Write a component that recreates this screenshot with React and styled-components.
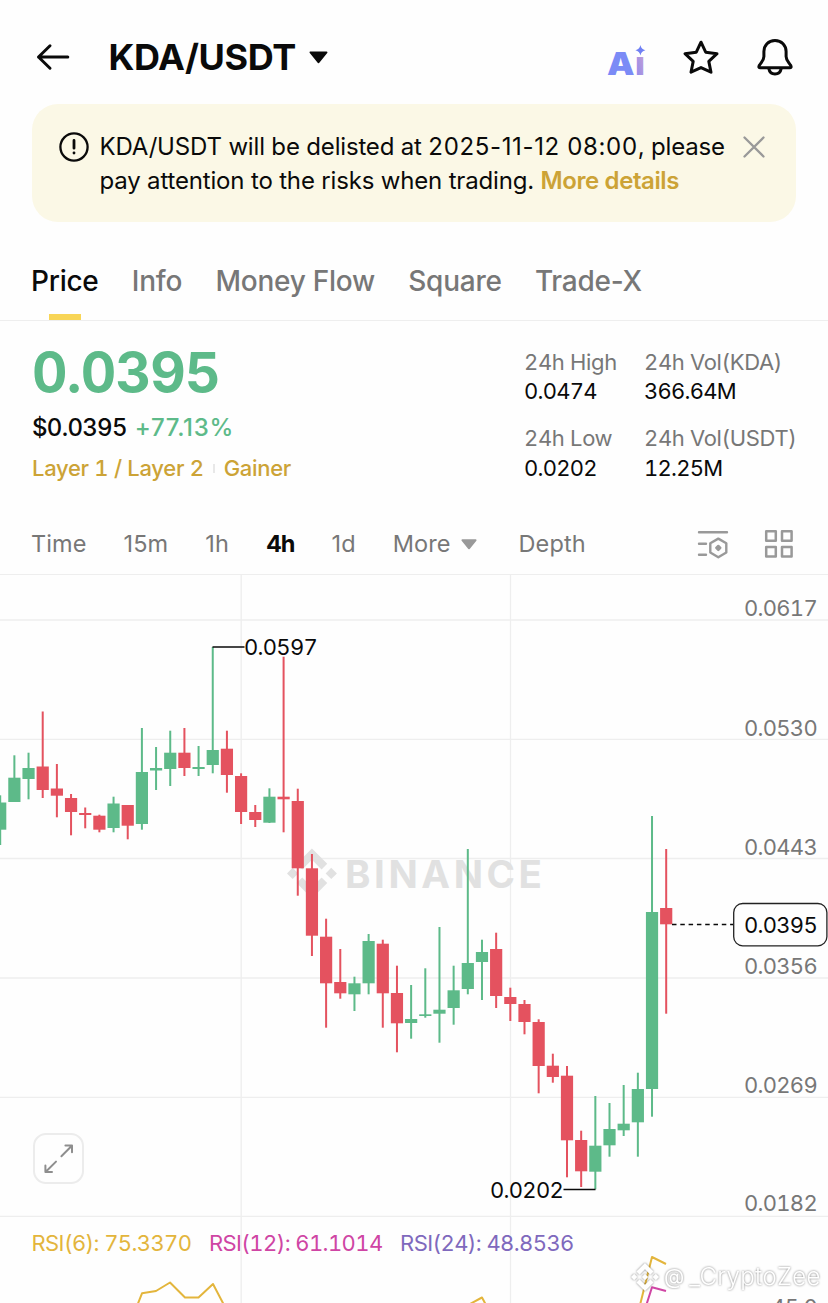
import React from "react";
import styled, { createGlobalStyle } from "styled-components";

const GREEN = "#5dba89";
const RED = "#e4525f";
const GOLD = "#cca336";
const GREY = "#777777";
const LINE = "#eeeeee";

const GlobalStyle = createGlobalStyle`
  * { box-sizing: border-box; }
  body {
    margin: 0;
    background: #fefefe;
    color: #0a0a0a;
    font-family: Inter, "Liberation Sans", sans-serif;
    overflow: hidden;
  }
`;

const Screen = styled.main`
  width: 828px;
  height: 1303px;
  overflow: hidden;
  display: flex;
  flex-direction: column;
  background: #fefefe;
`;

const Header = styled.header`
  flex: none;
  height: 104px;
  padding: 10px 35px 0 35px;
  display: flex;
  align-items: center;
`;

const Pair = styled.h1`
  margin: 0 13px 0 37.5px;
  font-size: 36px;
  line-height: 44px;
  font-weight: 700;
  letter-spacing: -0.4px;
`;

const HeaderActions = styled.div`
  margin-left: auto;
  display: flex;
  align-items: center;
  gap: 38px;
`;

const Icon = styled.svg`
  display: block;
  flex: none;
  overflow: visible;
  fill: none;
  stroke: ${(p) => p.$color || "#0a0a0a"};
  stroke-width: ${(p) => p.$stroke || 3};
  stroke-linecap: round;
  stroke-linejoin: round;
`;

const Notice = styled.section`
  flex: none;
  height: 118px;
  margin: 0 32px;
  padding: 26px 31px 0 26px;
  display: flex;
  align-items: flex-start;
  border-radius: 26px;
  background: #fbf8e6;
`;

const NoticeText = styled.p`
  margin: 0 0 0 9.5px;
  font-size: 24px;
  line-height: 34px;
  white-space: nowrap;
`;

const NoticeLine = styled.span`
  display: block;
  letter-spacing: -0.17px;
`;

const NoticeDate = styled.time`
  letter-spacing: 0.65px;
`;

const NoticeLink = styled.a`
  color: ${GOLD};
  font-weight: 600;
  letter-spacing: -0.4px;
`;

const NoticeIcon = styled.span`
  padding-top: 1px;
`;

const NoticeClose = styled.span`
  margin-left: auto;
  padding-top: 6px;
`;

const Tabs = styled.nav`
  flex: none;
  height: 99px;
  padding: 39px 31px 0;
  display: flex;
  gap: 33.3px;
  border-bottom: 1px solid ${LINE};
`;

const Tab = styled.div`
  display: flex;
  flex-direction: column;
  align-items: center;
  justify-content: space-between;
  font-size: 28px;
  line-height: 40px;
  font-weight: 500;
  letter-spacing: -0.25px;
  color: ${(p) => (p.$active ? "#0a0a0a" : GREY)};
`;

const TabMarker = styled.span`
  width: 32px;
  height: 6px;
  background: #f8d556;
`;

const Summary = styled.section`
  flex: none;
  height: 191px;
  padding: 21px 20px 0 32px;
  display: flex;
  font-variant-numeric: tabular-nums;
`;

const PriceColumn = styled.div`
  width: 492px;
`;

const LastPrice = styled.div`
  font-size: 55px;
  line-height: 60px;
  font-weight: 700;
  letter-spacing: -0.8px;
  color: ${GREEN};
`;

const FiatRow = styled.div`
  display: flex;
  gap: 8px;
  margin-top: 11px;
  font-size: 24px;
  line-height: 30px;
  font-weight: 500;
  letter-spacing: -0.7px;
`;

const Change = styled.span`
  color: ${GREEN};
  letter-spacing: 0.7px;
  font-variant-numeric: proportional-nums;
`;

const TagRow = styled.div`
  display: flex;
  align-items: center;
  gap: 9px;
  margin-top: 12px;
  font-size: 22px;
  line-height: 27px;
  font-weight: 500;
  letter-spacing: -0.3px;
  color: ${GOLD};
`;

const TagDivider = styled.span`
  width: 2px;
  height: 9px;
  background: #e8e8e8;
`;

const StatGrid = styled.div`
  display: grid;
  grid-template-columns: 120px 160px;
  grid-auto-rows: 59px;
  row-gap: 17.5px;
  padding-top: 5.5px;
`;

const Stat = styled.div`
  font-size: 22px;
  line-height: 29.5px;
  letter-spacing: -0.75px;
  white-space: nowrap;
`;

const StatLabel = styled.div`
  color: ${GREY};
  letter-spacing: -0.35px;
`;

const Toolbar = styled.nav`
  flex: none;
  height: 63px;
  padding: 2px 34px 0 31px;
  display: flex;
  align-items: center;
  gap: 37px;
  border-bottom: 1px solid ${LINE};
`;

const Interval = styled.span`
  display: flex;
  align-items: center;
  gap: 10px;
  margin-left: ${(p) => p.$indent || 0}px;
  font-size: 23.5px;
  line-height: 30px;
  letter-spacing: ${(p) => (p.$active ? -1 : 0.1)}px;
  font-weight: ${(p) => (p.$active ? 700 : 400)};
  color: ${(p) => (p.$active ? "#0a0a0a" : GREY)};
`;

const ToolIcons = styled.div`
  margin-left: auto;
  display: flex;
  align-items: center;
  gap: 35px;
`;

const PricePanel = styled.section`
  position: relative;
  flex: none;
  height: 642px;
`;

const Plot = styled.svg`
  display: block;
  text {
    font-size: 22px;
    letter-spacing: -0.7px;
    font-variant-numeric: tabular-nums;
  }
`;

const AxisLabel = styled.text`
  fill: ${(p) => (p.$strong ? "#0a0a0a" : GREY)};
  text-anchor: ${(p) => p.$anchor || "end"};
`;

const BrandMark = styled.text`
  && {
    font-size: 38.5px;
    font-weight: 700;
    letter-spacing: 0;
    fill: #e1e1e1;
  }
`;

const ExpandButton = styled.button`
  position: absolute;
  left: 33px;
  bottom: 33px;
  width: 51px;
  height: 51px;
  padding: 0;
  display: flex;
  align-items: center;
  justify-content: center;
  border: 2px solid #ececec;
  border-radius: 13px;
  background: #fefefe;
`;

const RsiPanel = styled.section`
  position: relative;
  flex: none;
  height: 86px;
  overflow: hidden;
`;

const RsiPlot = styled(Plot)`
  position: absolute;
  inset: 0;
`;

const Legend = styled.div`
  position: relative;
  display: flex;
  gap: 17.5px;
  padding: 11px 0 0 31.5px;
  font-size: 22px;
  line-height: 30px;
  letter-spacing: -0.6px;
  font-variant-numeric: tabular-nums;
`;

const LegendItem = styled.span`
  color: ${(p) => p.$color};
`;

const Signature = styled.div`
  position: absolute;
  left: 631px;
  top: 44px;
  display: flex;
  align-items: center;
  color: #ffffff;
  font-size: 24px;
  line-height: 32px;
  filter: drop-shadow(0 0 1px rgba(0, 0, 0, 0.5));
`;

const SignatureAt = styled.span`
  margin: 0 5px 0 5px;
  font-size: 21px;
`;

const SignatureName = styled.span`
  font-weight: 300;
  letter-spacing: 0.35px;
`;

const BINANCE_LOGO =
  "M16.624 13.9202l2.7175 2.7154-7.353 7.353-7.353-7.352 2.7175-2.7164 4.6355 4.6595 4.6356-4.6595zm4.6366-4.6366L24 12l-2.7154 2.7164L18.5682 12l2.6924-2.7164zm-9.272.001l2.7163 2.6914-2.7164 2.7174v-.001L9.2721 12l2.7164-2.7154zm-9.2722-.001L5.4088 12l-2.6914 2.6924L0 12l2.7164-2.7164zM11.9885.0115l7.353 7.329-2.7174 2.7154-4.6356-4.6356-4.6355 4.6595-2.7174-2.7154 7.353-7.353z";

// [rising, body top, body bottom, wick top, wick bottom]
const CANDLES = [
  [1, 802.5, 829.7, 795.3, 845],
  [1, 777.7, 802, 755.3, 802],
  [1, 768, 779, 752.7, 799.3],
  [0, 766.5, 790, 711.5, 798],
  [0, 788.5, 795.7, 764, 817.3],
  [0, 798, 812, 794, 835.3],
  [0, 813, 815, 807.5, 828.3],
  [0, 815.7, 829.7, 814.7, 832.3],
  [1, 803.5, 828, 796.7, 832.3],
  [0, 805, 825.7, 805, 839.3],
  [1, 772, 824, 728, 829.7],
  [1, 768, 770.5, 747, 790],
  [1, 752.7, 769, 730.7, 786],
  [0, 752.7, 768, 728, 776],
  [1, 767, 769, 746, 776],
  [1, 750, 765, 647, 773.3],
  [0, 748.7, 775, 730.7, 792.7],
  [0, 776, 812, 773.3, 824],
  [0, 812, 820, 805, 827],
  [1, 796.7, 822.7, 788.3, 823],
  [0, 796.7, 799.3, 656.7, 832.3],
  [0, 801, 868.3, 788.7, 895.7],
  [0, 868.3, 935.7, 854, 956],
  [0, 936.7, 983.3, 918.7, 1027.7],
  [0, 982, 993.3, 949, 998.7],
  [1, 983.3, 994.3, 976.7, 1011],
  [1, 941, 983.3, 934, 994.3],
  [0, 943.7, 993.3, 939.7, 1027.7],
  [0, 993, 1023.3, 965.7, 1052.3],
  [1, 1019, 1023, 985, 1038.7],
  [1, 1014.3, 1016, 968.3, 1017.7],
  [1, 1009.7, 1013.7, 927, 1042.7],
  [1, 990.3, 1008, 965.7, 1024.7],
  [1, 963, 989, 849, 994.3],
  [1, 952, 962, 939.7, 1000],
  [0, 949, 996, 932.7, 1008],
  [0, 997, 1004, 987.7, 1021],
  [0, 1004, 1022, 1000, 1034.3],
  [0, 1022, 1066, 1019.3, 1093.3],
  [0, 1065.7, 1077, 1053.7, 1082.7],
  [0, 1075.7, 1140.3, 1066, 1177.3],
  [0, 1140, 1171.3, 1130.7, 1187],
  [1, 1145.7, 1171.7, 1096, 1189.3],
  [1, 1129, 1145.3, 1103, 1156.7],
  [1, 1123.7, 1130.3, 1085, 1136],
  [1, 1089, 1122.3, 1072.7, 1156.7],
  [1, 912, 1089, 816, 1116.7],
  [0, 908, 924.3, 849, 1013.7],
];

const AXIS = [
  ["0.0617", 616],
  ["0.0530", 735.5],
  ["0.0443", 854.5],
  ["0.0356", 974],
  ["0.0269", 1093],
  ["0.0182", 1210.5],
];

const ROWS = [620, 739.4, 858.5, 978, 1097.3, 1216.4];
const COLUMNS = [241.2, 510.5];

const Candle = ({ index, data }) => {
  const [rising, top, bottom, high, low] = data;
  const x = 0.2 + index * 14.17;
  const color = rising ? GREEN : RED;
  return (
    <g fill={color}>
      <rect x={x - 1} y={high} width="2" height={low - high} />
      <rect x={x - 6.1} y={top} width="12.2" height={bottom - top} />
    </g>
  );
};

const BackIcon = () => (
  <Icon width="36" height="30" viewBox="0 0 36 30">
    <path d="M3.5 15H32.8M15 3.8L3.5 15L15 26.2" />
  </Icon>
);

const CaretIcon = ({ width, height, color }) => (
  <Icon width={width} height={height} viewBox="0 0 18 12" $color={color} $stroke={2}>
    <path d="M1.5 1.2H16.5L9 10.4Z" fill={color} />
  </Icon>
);

const AiText = styled.text`
  font-size: 32px;
  font-weight: 900;
  stroke: none;
`;

const AiIcon = () => (
  <Icon width="40" height="36" viewBox="0 0 40 36">
    <defs>
      <linearGradient id="ai" x1="0" y1="1" x2="1" y2="0">
        <stop offset="0" stopColor="#8488f2" />
        <stop offset="1" stopColor="#d3a3cf" />
      </linearGradient>
    </defs>
    <AiText x="2" y="36" fill="#7b8bf6" textLength="27.5" lengthAdjust="spacingAndGlyphs">A</AiText>
    <AiText x="30.2" y="36" fill="url(#ai)">ı</AiText>
    <path
      d="M35.4 6Q36.2 10.4 40.4 11.2Q36.2 12 35.4 16.4Q34.6 12 30.4 11.2Q34.6 10.4 35.4 6Z"
      fill="#7080f4"
      stroke="none"
    />
  </Icon>
);

const StarIcon = () => (
  <Icon width="36" height="36" viewBox="0 0 36 36">
    <path d="M18 3.2L22.7 13.2L34 14.7L25.8 22.4L28 33.2L18 28.6L8 33.2L10.2 22.4L2 14.7L13.3 13.2Z" />
  </Icon>
);

const BellIcon = () => (
  <Icon width="36" height="38" viewBox="0 0 36 38">
    <path d="M18 2.5C11.4 2.5 6.9 7.3 6.9 13.6V18.5C6.9 22.5 4 24.4 2.2 27.6C1.5 29 2 29.8 3.3 29.8H32.7C34 29.8 34.5 29 33.8 27.6C32 24.4 29.1 22.5 29.1 18.5V13.6C29.1 7.3 24.6 2.5 18 2.5Z" />
    <path d="M11.8 30.5C12.4 34 14.8 36 18 36C21.2 36 23.6 34 24.2 30.5" />
  </Icon>
);

const AlertIcon = () => (
  <Icon width="32" height="32" viewBox="0 0 32 32" $stroke={2.3}>
    <circle cx="16" cy="16" r="13.6" />
    <path d="M16 9.5V17.2M16 21.8V22" strokeWidth="2.8" />
  </Icon>
);

const CloseIcon = () => (
  <Icon width="22" height="22" viewBox="0 0 22 22" $color="#999999" $stroke={2.3}>
    <path d="M1.5 1.5L20.5 20.5M20.5 1.5L1.5 20.5" />
  </Icon>
);

const IndicatorIcon = () => (
  <Icon width="32" height="32" viewBox="0 0 32 32" $color="#999999" $stroke={2.4}>
    <path d="M2 4.2H30M2 15.7H9M2 26.7H9" />
    <path d="M21.3 10.6L29.3 15.2V24.5L21.3 29.2L13.3 24.5V15.2Z" />
    <path d="M21.3 17.9L23.3 19.9L21.3 21.9L19.3 19.9Z" fill="#999999" />
  </Icon>
);

const GridIcon = () => (
  <Icon width="30" height="30" viewBox="0 0 30 30" $color="#999999" $stroke={2.5}>
    <path d="M2.2 2.2H11.8V11.8H2.2ZM18 2.2H27.6V11.8H18ZM2.2 18H11.8V27.6H2.2ZM18 18H27.6V27.6H18Z" />
  </Icon>
);

const ExpandIcon = () => (
  <Icon width="32" height="32" viewBox="0 0 32 32" $color="#8e8e8e" $stroke={2}>
    <path d="M18.4 13.2L28.6 3M22.4 2.6H29V9.2M13 18.6L2.8 28.8M2.4 22.4V29H9" />
  </Icon>
);

export default function App() {
  return (
    <>
      <GlobalStyle />
      <Screen>
        <Header>
          <BackIcon />
          <Pair>KDA/USDT</Pair>
          <CaretIcon width="19" height="13" color="#0a0a0a" />
          <HeaderActions>
            <AiIcon />
            <StarIcon />
            <BellIcon />
          </HeaderActions>
        </Header>

        <Notice>
          <NoticeIcon>
            <AlertIcon />
          </NoticeIcon>
          <NoticeText>
            <NoticeLine>
              KDA/USDT will be delisted at <NoticeDate>2025-11-12 08:00</NoticeDate>, please
            </NoticeLine>
            <NoticeLine>
              pay attention to the risks when trading. <NoticeLink>More details</NoticeLink>
            </NoticeLine>
          </NoticeText>
          <NoticeClose>
            <CloseIcon />
          </NoticeClose>
        </Notice>

        <Tabs>
          <Tab $active>
            Price
            <TabMarker />
          </Tab>
          {["Info", "Money Flow", "Square", "Trade-X"].map((name) => (
            <Tab key={name}>{name}</Tab>
          ))}
        </Tabs>

        <Summary>
          <PriceColumn>
            <LastPrice>0.0395</LastPrice>
            <FiatRow>
              <span>$0.0395</span>
              <Change>+77.13%</Change>
            </FiatRow>
            <TagRow>
              <span>Layer 1 / Layer 2</span>
              <TagDivider />
              <span>Gainer</span>
            </TagRow>
          </PriceColumn>
          <StatGrid>
            {[
              ["24h High", "0.0474"],
              ["24h Vol(KDA)", "366.64M"],
              ["24h Low", "0.0202"],
              ["24h Vol(USDT)", "12.25M"],
            ].map(([label, value]) => (
              <Stat key={label}>
                <StatLabel>{label}</StatLabel>
                {value}
              </Stat>
            ))}
          </StatGrid>
        </Summary>

        <Toolbar>
          <Interval>Time</Interval>
          <Interval>15m</Interval>
          <Interval>1h</Interval>
          <Interval $active>4h</Interval>
          <Interval>1d</Interval>
          <Interval>
            More
            <CaretIcon width="16" height="11" color="#999999" />
          </Interval>
          <Interval $indent={5}>Depth</Interval>
          <ToolIcons>
            <IndicatorIcon />
            <GridIcon />
          </ToolIcons>
        </Toolbar>

        <PricePanel>
          <Plot width="828" height="642" viewBox="0 575 828 642">
            <g stroke={LINE} strokeWidth="1.3">
              {ROWS.map((y) => (
                <line key={y} x1="0" x2="828" y1={y} y2={y} />
              ))}
              {COLUMNS.map((x) => (
                <line key={x} x1={x} x2={x} y1="575" y2="1217" />
              ))}
            </g>
            <path d={BINANCE_LOGO} fill="#e1e1e1" transform="translate(287 848.5) scale(2.08)" />
            <BrandMark x="345" y="888" textLength="197">
              BINANCE
            </BrandMark>
            {CANDLES.map((data, i) => (
              <Candle key={i} index={i} data={data} />
            ))}
            <g stroke="#0a0a0a" strokeWidth="1.3">
              <line x1="212.5" x2="244.5" y1="647" y2="647" />
              <line x1="563.5" x2="595.5" y1="1189.5" y2="1189.5" />
              <line x1="672" x2="733" y1="924.5" y2="924.5" strokeDasharray="4.5 3.8" />
            </g>
            <AxisLabel $strong $anchor="start" x="244" y="655.3">0.0597</AxisLabel>
            <AxisLabel $strong $anchor="start" x="490" y="1198">0.0202</AxisLabel>
            {AXIS.map(([label, y]) => (
              <AxisLabel key={label} x="817" y={y}>
                {label}
              </AxisLabel>
            ))}
            <rect
              x="733.7"
              y="903.5"
              width="93.2"
              height="42.3"
              rx="9"
              fill="#fefefe"
              stroke="#222222"
              strokeWidth="1.3"
            />
            <AxisLabel $strong x="817" y="933">0.0395</AxisLabel>
          </Plot>
          <ExpandButton aria-label="Expand chart">
            <ExpandIcon />
          </ExpandButton>
        </PricePanel>

        <RsiPanel>
          <RsiPlot width="828" height="86" viewBox="0 1217 828 86">
            {COLUMNS.map((x) => (
              <line key={x} x1={x} x2={x} y1="1217" y2="1303" stroke={LINE} strokeWidth="1.3" />
            ))}
            <g fill="none" strokeWidth="2" strokeLinejoin="round">
              <path
                stroke="#e3b53c"
                d="M137 1306L142 1293.3L156 1291L170 1282.5L185 1297.5H198.5L213 1284L224 1305M470 1304L482 1297.5L486 1305M640 1305L652 1257L666 1264"
              />
              <path stroke="#cf45a4" d="M646 1306L652 1287.3L666 1291" />
            </g>
            <AxisLabel x="817" y="1315">45.0</AxisLabel>
          </RsiPlot>
          <Legend>
            <LegendItem $color="#e3b53c">RSI(6): 75.3370</LegendItem>
            <LegendItem $color="#cf45a4">RSI(12): 61.1014</LegendItem>
            <LegendItem $color="#7f69bd">RSI(24): 48.8536</LegendItem>
          </Legend>
          <Signature>
            <svg width="28" height="28" viewBox="0 0 24 24">
              <path d={BINANCE_LOGO} fill="#ffffff" />
            </svg>
            <SignatureAt>@</SignatureAt>
            <SignatureName>_CryptoZee</SignatureName>
          </Signature>
        </RsiPanel>
      </Screen>
    </>
  );
}
